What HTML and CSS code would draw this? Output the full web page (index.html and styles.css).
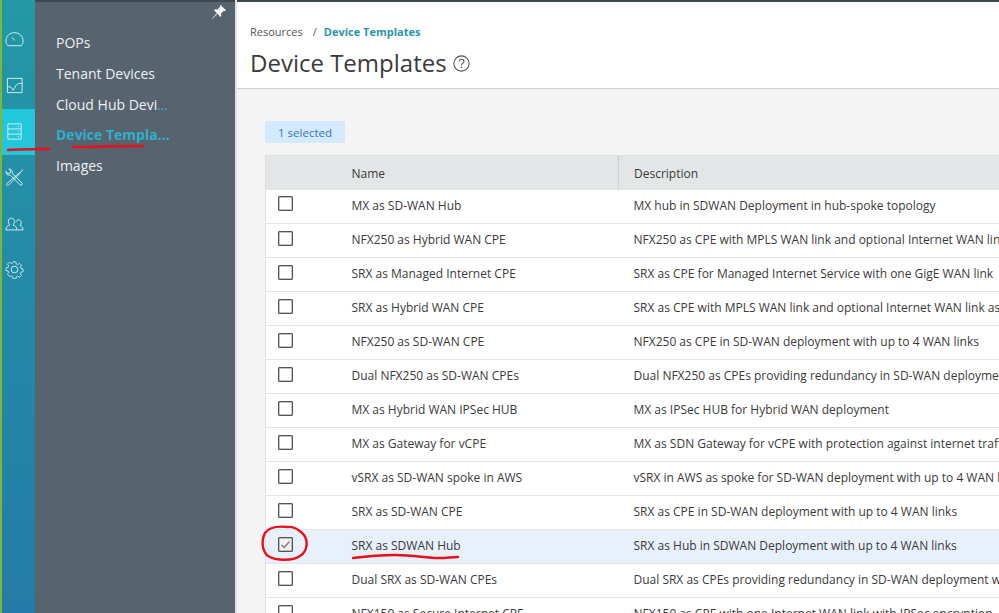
FILE: index.html
```html
<!DOCTYPE html>
<html lang="en">
<head>
<meta charset="utf-8">
<title>Device Templates</title>
<link rel="stylesheet" href="styles.css">
</head>
<body>
<div class="app">
  <div class="accent"></div>
  <aside class="rail">
    <a class="rail-item">
      <svg class="ico" viewBox="0 0 20 20"><path d="M2.800 16.500h14.400c.9-1 1.800-3 1.800-5.200C19 6.400 15 2.800 10 2.800S1 6.400 1 11.300c0 2.200.9 4.200 1.800 5.200z"/><path d="M7.200 7.800l3.300 3.200"/></svg>
    </a>
    <a class="rail-item">
      <svg class="ico" viewBox="0 0 20 20"><path d="M2.500 2.500h15.500v15H2.500z"/><path d="M2.500 11.500h3.500l2.500 3.500 3.500-5.500c1-1.300 3-1.800 6-1.800"/></svg>
    </a>
    <a class="rail-item">
      <svg class="ico" viewBox="0 0 20 20"><path d="M3 2h14v16H3zM3 7.300h14M3 12.700h14"/><path d="M13.500 4.700h1M13.500 10h1M13.500 15.300h1"/></svg>
    </a>
    <a class="rail-item">
      <svg class="ico" viewBox="0 0 20 20"><path d="M5.500 7.500L16 17.800c1 1 3-.7 2-1.900L7.500 5.500c.7-2-.5-4.500-3.500-4.500l2 2.300-.7 2.200-2.300.6L1.200 3.500c-.5 2.800 1.800 4.800 4.300 4z"/><path d="M18.800 1.500l-2.300 3-1 .2L1.800 16.500c-.8 1 .6 2.500 1.700 1.700L15.800 5.800l.2-1"/></svg>
    </a>
    <a class="rail-item">
      <svg class="ico" viewBox="0 0 20 20"><path d="M1 16.800c0-3 1.700-4.500 4-5.300-1-1-1.500-2.100-1.500-3.500C3.500 6 4.900 4.400 6.800 4.400S10 6 10 8c0 1.400-.5 2.500-1.500 3.500 2.300.8 4 2.300 4 5.300z"/><path d="M12.500 16.800H19c0-2.700-1.300-4-3.200-4.800.9-.9 1.200-1.800 1.200-2.900 0-1.700-1.100-3-2.700-3-1.300 0-2.300.8-2.600 2.100"/></svg>
    </a>
    <a class="rail-item">
      <svg class="ico" viewBox="0 0 20 20"><circle cx="10" cy="10" r="3.500"/><path d="M8.400 1h3.200l.5 2.500 1.700.7 2.200-1.400 2.200 2.200-1.400 2.200.7 1.700 2.500.5v3.200l-2.500.5-.7 1.700 1.400 2.200-2.200 2.200-2.200-1.400-1.700.7-.5 2.500H8.400l-.5-2.500-1.700-.7L4 17.900l-2.200-2.200 1.400-2.200-.7-1.700L0 11.300V8.100l2.500-.5.700-1.700L1.800 3.700 4 1.500l2.200 1.400 1.700-.7z" transform="translate(1 1) scale(.9)"/></svg>
    </a>
  </aside>
  <nav class="subnav">
    <svg class="pin" viewBox="0 0 16 16"><path d="M9.500 1l5.500 5.300-1.400.7-.9-.2-2.700 2.600.2 2.500-1 1L6.600 9.500 1.500 14.800l-.5-.4L6 9 3 6.300l1-1 2.600.1 2.500-2.600-.2-1z"/></svg>
    <ul class="subnav-list">
      <li class="subnav-item"><span>POPs</span></li>
      <li class="subnav-item"><span>Tenant Devices</span></li>
      <li class="subnav-item"><span>Cloud Hub Devices</span></li>
      <li class="subnav-item current"><span>Device Templates</span></li>
      <li class="subnav-item"><span>Images</span></li>
    </ul>
  </nav>
  <main class="main">
    <header class="page-head">
      <div class="crumbs"><span>Resources</span><span class="sep">/</span><b>Device Templates</b></div>
      <h1 class="title">Device Templates
        <svg class="help" viewBox="0 0 16 16"><circle cx="8" cy="8" r="7.200"/><path d="M5.800 6.200c0-1.400 1-2.200 2.300-2.200s2.200.8 2.200 2c0 1.700-2.300 1.800-2.300 3.600"/><path d="M8 11v1.300"/></svg>
      </h1>
    </header>
    <section class="content">
      <div class="badge">1 selected</div>
      <table class="grid">
        <colgroup><col class="c-check"><col class="c-name"><col></colgroup>
        <thead>
          <tr><th></th><th>Name</th><th class="desc-head">Description</th></tr>
        </thead>
        <tbody>
          <tr><td><span class="box"></span></td><td>MX as SD-WAN Hub</td><td>MX hub in SDWAN Deployment in hub-spoke topology</td></tr>
          <tr><td><span class="box"></span></td><td>NFX250 as Hybrid WAN CPE</td><td>NFX250 as CPE with MPLS WAN link and optional Internet WAN link</td></tr>
          <tr><td><span class="box"></span></td><td>SRX as Managed Internet CPE</td><td>SRX as CPE for Managed Internet Service with one GigE WAN link</td></tr>
          <tr><td><span class="box"></span></td><td>SRX as Hybrid WAN CPE</td><td>SRX as CPE with MPLS WAN link and optional Internet WAN link as backup</td></tr>
          <tr><td><span class="box"></span></td><td>NFX250 as SD-WAN CPE</td><td>NFX250 as CPE in SD-WAN deployment with up to 4 WAN links</td></tr>
          <tr><td><span class="box"></span></td><td>Dual NFX250 as SD-WAN CPEs</td><td>Dual NFX250 as CPEs providing redundancy in SD-WAN deployment</td></tr>
          <tr><td><span class="box"></span></td><td>MX as Hybrid WAN IPSec HUB</td><td>MX as IPSec HUB for Hybrid WAN deployment</td></tr>
          <tr><td><span class="box"></span></td><td>MX as Gateway for vCPE</td><td>MX as SDN Gateway for vCPE with protection against internet traffic</td></tr>
          <tr><td><span class="box"></span></td><td>vSRX as SD-WAN spoke in AWS</td><td>vSRX in AWS as spoke for SD-WAN deployment with up to 4 WAN links</td></tr>
          <tr><td><span class="box"></span></td><td>SRX as SD-WAN CPE</td><td>SRX as CPE in SD-WAN deployment with up to 4 WAN links</td></tr>
          <tr class="selected"><td><span class="box"><svg viewBox="0 0 15 15"><path d="M3 8l3 3 6-7"/></svg></span></td><td>SRX as SDWAN Hub</td><td>SRX as Hub in SDWAN Deployment with up to 4 WAN links</td></tr>
          <tr><td><span class="box"></span></td><td>Dual SRX as SD-WAN CPEs</td><td>Dual SRX as CPEs providing redundancy in SD-WAN deployment with</td></tr>
          <tr><td><span class="box"></span></td><td>NFX150 as Secure Internet CPE</td><td>NFX150 as CPE with one Internet WAN link with IPSec encryption</td></tr>
        </tbody>
      </table>
    </section>
  </main>
  <svg class="marks" viewBox="0 0 999 613">
    <path d="M8 150c12-1 26-1 41-1"/>
    <path d="M73 147c24 0 47-1 70-1"/>
    <path d="M288 527c-9-1-19 0-23 6-4 8-3 18 3 23 8 5 25 5 32 0 8-5 8-15 4-21-4-5-11-9-16-8"/>
    <path d="M353 558c16-2 26-3 42-3 20 0 30 3 44 3 7 0 13-1 19-1"/>
  </svg>
</div>
</body>
</html>
```
FILE: styles.css
```css
* { box-sizing: border-box; }
html, body { margin: 0; height: 100%; overflow: hidden; }
body { font-family: "Open Sans", "Liberation Sans", sans-serif; color: #3a3a3a; background: #f4f4f4; }
.app { position: relative; display: flex; width: 999px; height: 613px; overflow: hidden; }
.accent { flex: 0 0 2px; background: #7ab835; }
.rail { flex: 0 0 33px; padding-top: 17px; background: linear-gradient(#2398a6, #247ba7); }
.rail-item { display: flex; align-items: center; justify-content: center; height: 46px; padding: 0 8px 2px 0; color: #d6eff2; }
.rail-item:nth-child(3) { background: #23c7dc; }
.ico { flex: none; width: 19px; height: 19px; fill: none; stroke: currentColor; stroke-width: 1; }
.subnav { position: relative; flex: 0 0 200px; padding: 26px 0 0 21px; background: #57636f; border-top: 2px solid #3b4a4f; }
.pin { position: absolute; top: 2px; right: 8px; width: 16px; height: 16px; fill: #fff; }
.subnav-list { margin: 0; padding: 0; list-style: none; }
.subnav-item { width: 115px; height: 30.800px; line-height: 30.800px; font-size: 14px; color: #23b8d2; white-space: nowrap; overflow: hidden; text-overflow: ellipsis; }
.subnav-item span { color: #eef0f2; }
.subnav-item.current { font-weight: 700; }
.subnav-item.current span { color: #2bb1cb; }
.main { flex: 1; min-width: 0; overflow: hidden; border-left: 2px solid #e0e2e4; }
.page-head { height: 89px; padding: 22px 0 0 13px; background: #fff; border-top: 2px solid #3b4a4f; border-bottom: 1px solid #cfcfcf; }
.crumbs { height: 16px; font-size: 11px; line-height: 16px; color: #555; }
.crumbs .sep { margin: 0 7px 0 10px; }
.crumbs b { color: #2b96a8; font-weight: 700; }
.title { display: flex; align-items: center; gap: 6px; margin: 6px 0 0; font-size: 24px; line-height: 33px; font-weight: 400; color: #3a3a3a; }
.help { width: 17px; height: 17px; margin-top: 2px; fill: none; stroke: #555; stroke-width: 1; }
.content { height: 524px; padding: 32px 0 0 28px; background: #f4f4f4; }
.badge { width: 80px; height: 22px; border-radius: 2px; background: #d3eafc; color: #3c70c4; font-size: 11.500px; line-height: 23px; text-align: center; }
.grid { width: 1000px; margin-top: 12px; table-layout: fixed; border-collapse: collapse; background: #fff; border: 1px solid #dcdedf; font-size: 12px; color: #3a3a3a; }
.c-check { width: 85px; }
.c-name { width: 268px; }
.grid th { height: 34px; padding: 2px 0 0 1px; background: #e3e6e7; font-weight: 400; text-align: left; }
.grid th.desc-head { padding-left: 15px; border-left: 1px dotted #bdbdbd; }
.grid td { height: 34px; padding: 0 0 2px 1px; border-bottom: 1px solid #e3e5e6; white-space: nowrap; overflow: hidden; }
.grid td:last-child { padding-left: 15px; }
.grid td:first-child { padding: 0 0 5px 12px; }
.grid tr.selected td { background: #e8f0fb; }
.box { display: block; width: 15px; height: 15px; background: #fff; border: 1px solid #555; border-radius: 1px; box-shadow: inset 0 0 0 .5px #888; }
.selected .box { background: #f1f1f1; }
.box svg { display: block; width: 13px; height: 13px; fill: none; stroke: #7b7b7b; stroke-width: 1.600; }
.marks { position: absolute; left: 0; top: 0; width: 999px; height: 613px; fill: none; stroke: #e8101a; stroke-width: 2.400; stroke-linecap: round; pointer-events: none; }
```
